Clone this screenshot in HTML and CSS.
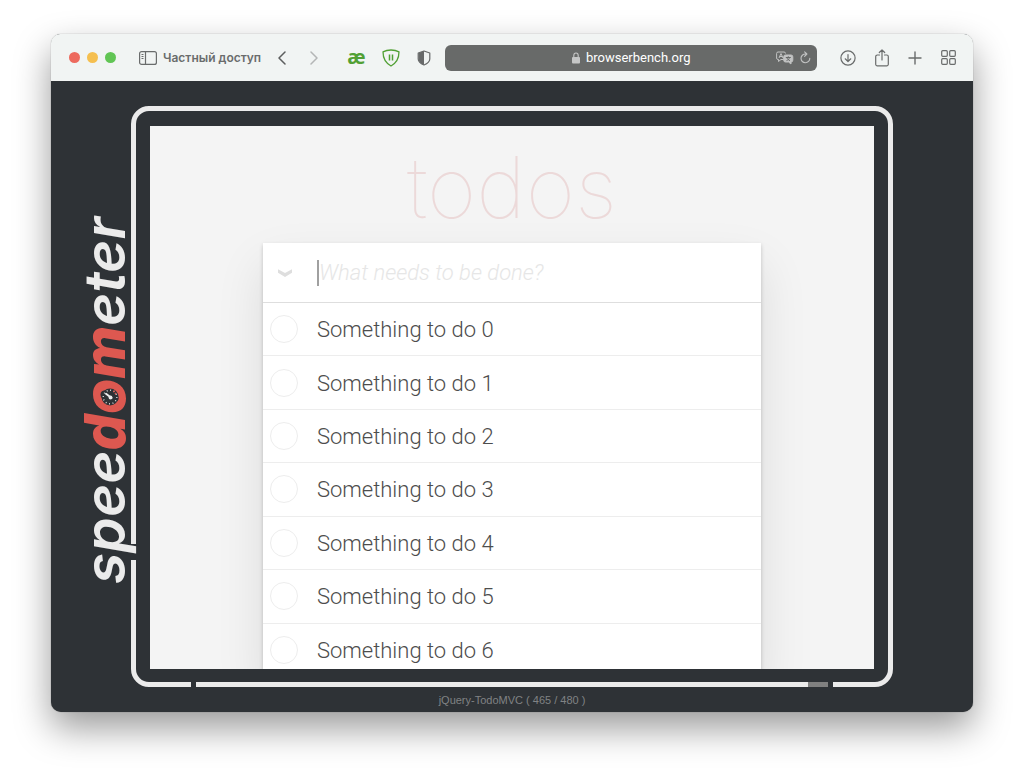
FILE: index.html
```html
<!DOCTYPE html>
<html lang="ru">
<head>
<meta charset="utf-8">
<title>Speedometer</title>
<link rel="stylesheet" href="styles.css">
</head>
<body>
<div class="window">
  <header class="toolbar">
    <div class="lights">
      <button class="light red" aria-label="Закрыть"></button>
      <button class="light yellow" aria-label="Свернуть"></button>
      <button class="light green" aria-label="Развернуть"></button>
    </div>
    <button class="private">
      <svg width="18" height="14" viewBox="0 0 18 14" fill="none" stroke="currentColor"><rect x=".6" y=".6" width="16.8" height="12.8" rx="2" stroke-width="1.2"/><path d="M6.5 .6v12.8" stroke-width="1.2"/><path d="M2.5 3.5h2M2.5 5.5h2M2.5 7.5h2"/></svg>
      <span>Частный доступ</span>
    </button>
    <div class="nav">
      <button class="icon" aria-label="Назад"><svg width="10" height="14" viewBox="0 0 10 14" fill="none" stroke="#5c5e5e" stroke-width="1.5" stroke-linecap="round" stroke-linejoin="round"><path d="M8 1 2 7l6 6"/></svg></button>
      <button class="icon" aria-label="Вперёд"><svg width="10" height="14" viewBox="0 0 10 14" fill="none" stroke="#b4b6b6" stroke-width="1.5" stroke-linecap="round" stroke-linejoin="round"><path d="m2 1 6 6-6 6"/></svg></button>
    </div>
    <div class="extensions">
      <button class="ae" aria-label="æ">æ</button>
      <button class="icon" aria-label="AdGuard"><svg width="18" height="18" viewBox="0 0 18 18" fill="none" stroke="#51a034" stroke-width="1.3" stroke-linejoin="round"><path d="M9 1C6.400 1 3.500 1.500 1 2.800c0 6 1.600 10.700 8 14.200 6.400-3.500 8-8.200 8-14.200C14.500 1.500 11.600 1 9 1z"/><path d="M7.500 5.500v6M10.500 5.500v6" stroke-width="1.500"/></svg></button>
      <button class="icon" aria-label="Отчёт"><svg width="14" height="16" viewBox="0 0 14 16"><path d="M7 1 1.500 3v6c0 3 2.500 4.700 5.500 6z" fill="#686a6a"/><path d="M7 1 1.200 3v6c0 3 2.800 4.700 5.800 6 3-1.300 5.800-3 5.800-6V3z" fill="none" stroke="#686a6a" stroke-width="1.200" stroke-linejoin="round"/></svg></button>
    </div>
    <div class="address">
      <a class="site" href="#">
        <svg width="8" height="12" viewBox="0 0 8 12"><rect y="5" width="8" height="6.500" rx="1" fill="#c5c6c6"/><path d="M1.800 5.500V3.500a2.200 2.500 0 0 1 4.400 0v2" fill="none" stroke="#c5c6c6" stroke-width="1.100"/></svg>
        <span>browserbench.org</span>
      </a>
      <div class="actions">
        <button class="icon" aria-label="Перевести"><svg width="18" height="14" viewBox="0 0 18 14" fill="none" stroke="#c2c3c3" stroke-linejoin="round"><path d="M7.500 8.500H5l-2.500 2V8.500H2A1.500 1.500 0 0 1 .6 7V2.500A1.500 1.500 0 0 1 2 1h6a1.500 1.500 0 0 1 1.500 1.500"/><path d="m3 7 2-4.500L7 7M3.700 5.500h2.600"/><path d="M9.500 4H15a1.800 1.800 0 0 1 1.800 1.800v3.400A1.800 1.800 0 0 1 15 11v2l-2.500-2h-3a1.800 1.800 0 0 1-1.800-1.800V5.800A1.800 1.800 0 0 1 9.500 4z" fill="#c2c3c3"/><path d="M9.800 6.500h5M12.300 5.300v1.200M10.500 9.600c1.600-.6 2.600-1.500 3-3M11 7c.6 1.200 1.500 2 3 2.600" stroke="#686a69"/></svg></button>
        <button class="icon" aria-label="Обновить"><svg width="11" height="13" viewBox="0 0 11 13" fill="none" stroke="#c2c3c3" stroke-width="1.100" stroke-linecap="round" stroke-linejoin="round"><path d="M9.800 7.300A4.400 4.400 0 1 1 5.500 3h1.200M4.600.8 6.900 3 4.600 5.300"/></svg></button>
      </div>
    </div>
    <div class="tools">
      <button class="icon" aria-label="Загрузки"><svg width="16" height="16" viewBox="0 0 16 16" fill="none" stroke="currentColor" stroke-width="1.200" stroke-linecap="round" stroke-linejoin="round"><circle cx="8" cy="8" r="7.100"/><path d="M8 4.500v7M5.200 8.800 8 11.500l2.800-2.700"/></svg></button>
      <button class="icon" aria-label="Поделиться"><svg width="14" height="18" viewBox="0 0 14 18" fill="none" stroke="currentColor" stroke-width="1.200" stroke-linecap="round" stroke-linejoin="round"><path d="M4.500 6H2.300A1.600 1.600 0 0 0 .7 7.600v7.600a1.600 1.600 0 0 0 1.600 1.600h9.400a1.600 1.600 0 0 0 1.600-1.600V7.600A1.600 1.600 0 0 0 11.700 6H9.500M7 11V1M4.300 3.500 7 .9l2.700 2.600"/></svg></button>
      <button class="icon" aria-label="Новая вкладка"><svg width="14" height="14" viewBox="0 0 14 14" stroke="currentColor" stroke-width="1.400" stroke-linecap="round"><path d="M7 1v12M1 7h12"/></svg></button>
      <button class="icon" aria-label="Обзор вкладок"><svg width="15" height="15" viewBox="0 0 15 15" fill="none" stroke="currentColor" stroke-width="1.200"><rect x=".7" y=".7" width="5.600" height="5.600" rx="1"/><rect x="8.700" y=".7" width="5.600" height="5.600" rx="1"/><rect x=".7" y="8.700" width="5.600" height="5.600" rx="1"/><rect x="8.700" y="8.700" width="5.600" height="5.600" rx="1"/></svg></button>
    </div>
  </header>

  <main class="bench">
    <div class="frame">
      <svg class="logo" width="72" height="380" viewBox="0 0 72 380" role="img" aria-label="speedometer">
        <rect x="60" y="338" width="7" height="16" fill="#2e3236"/>
        <text class="logo-text" transform="translate(55 378) rotate(-90)">spee<tspan class="logo-red">dom</tspan>eter</text>
        <g transform="translate(40 191)" fill="none" stroke="#ebebeb">
          <circle r="8.500" fill="#2e3236" stroke="none"/>
          <circle r="6.800" stroke-width="1.400" stroke-dasharray=".9 2.660"/>
          <path d="M-4-3.200 1.500 1" stroke-width="2" stroke-linecap="round"/>
          <circle cx=".5" cy=".5" r="1.900" fill="#ebebeb" stroke="none"/>
          <path d="M3.500-6.300 4.500-5M6-4 5-3" stroke="#dd5850" stroke-width="1.500"/>
        </g>
      </svg>
      <section class="screen">
        <h1 class="title">todos</h1>
        <div class="card">
          <div class="entry">
            <button class="toggle-all" aria-label="Toggle all"><svg width="16" height="10" viewBox="0 0 16 10" fill="#dedede"><path d="M1 1.200 8 5l7-3.800v3.600L8 9 1 4.800z"/></svg></button>
            <span class="caret"></span>
            <input class="new-todo" type="text" placeholder="What needs to be done?" aria-label="New todo">
          </div>
          <ul class="todos">
            <li class="todo"><label><input type="checkbox"><span>Something to do 0</span></label></li>
            <li class="todo"><label><input type="checkbox"><span>Something to do 1</span></label></li>
            <li class="todo"><label><input type="checkbox"><span>Something to do 2</span></label></li>
            <li class="todo"><label><input type="checkbox"><span>Something to do 3</span></label></li>
            <li class="todo"><label><input type="checkbox"><span>Something to do 4</span></label></li>
            <li class="todo"><label><input type="checkbox"><span>Something to do 5</span></label></li>
            <li class="todo"><label><input type="checkbox"><span>Something to do 6</span></label></li>
          </ul>
        </div>
      </section>
      <div class="progress"><div class="progress-done" style="width: 96.875%"></div></div>
    </div>
    <p class="status">jQuery-TodoMVC ( 465 / 480 )</p>
  </main>
</div>
</body>
</html>
```
FILE: styles.css
```css
* { box-sizing: border-box; }

body {
  margin: 0;
  height: 100vh;
  min-height: 480px;
  padding: 34px 51px 67px;
  background: #fff;
  font-family: "Liberation Sans", Arial, sans-serif;
  overflow: hidden;
}

button {
  padding: 0;
  border: 0;
  background: none;
  color: inherit;
  font: inherit;
}

.window {
  display: flex;
  flex-direction: column;
  height: 100%;
  border-radius: 10px;
  background: #2e3236;
  box-shadow: 0 0 1px rgba(0, 0, 0, .5), 0 16px 36px rgba(0, 0, 0, .4);
}

.toolbar {
  display: flex;
  align-items: center;
  height: 47px;
  flex: none;
  padding: 0 17px 0 18px;
  border-radius: 9px 9px 0 0;
  background: #f1f4f3;
  color: #6a6c6c;
}

.lights { display: flex; gap: 7px; }
.light { width: 11px; height: 11px; border-radius: 50%; }
.red { background: #ed6a5e; }
.yellow { background: #f5bf4f; }
.green { background: #61c554; }

.icon { display: flex; }

.private {
  display: flex;
  align-items: center;
  gap: 6px;
  margin-left: 23px;
  font: 600 12px Inter, sans-serif;
  white-space: nowrap;
}

.nav { display: flex; gap: 22px; margin-left: 16px; }

.extensions {
  display: flex;
  align-items: center;
  gap: 17px;
  margin: 0 14px 0 28px;
}

.ae {
  padding-bottom: 2px;
  color: #51a034;
  font: 700 20px/20px "Open Sans", sans-serif;
}

.address {
  display: grid;
  grid-template-columns: 1fr auto 1fr;
  align-items: center;
  flex: 1;
  height: 26px;
  padding: 0 6px;
  border-radius: 6px;
  background: #686a69;
}

.site {
  grid-column: 2;
  display: flex;
  align-items: center;
  gap: 6px;
  color: #fff;
  font: 400 13px Roboto, sans-serif;
  text-decoration: none;
}

.actions {
  display: flex;
  align-items: center;
  justify-content: flex-end;
  gap: 6px;
}

.tools {
  display: flex;
  align-items: center;
  gap: 19px;
  margin-left: 23px;
}

.bench {
  display: flex;
  flex-direction: column;
  flex: 1;
  min-height: 0;
  padding: 25px 80px 5px;
}

.frame {
  position: relative;
  display: flex;
  flex: 1;
  min-height: 0;
  padding: 15px 14px 13px;
  border: 5px solid #ebebeb;
  border-radius: 18px;
}

/* Vertical wordmark drawn across the left edge of the frame. */
.logo {
  position: absolute;
  left: -66px;
  bottom: 96px;
  overflow: visible;
}

.logo-text {
  fill: #ebebeb;
  font: italic 600 57px Inter, sans-serif;
}

.logo-red { fill: #dd5850; font-weight: 800; }

.screen {
  flex: 1;
  min-width: 0;
  overflow: hidden;
  background: #f4f4f4;
}

.title {
  margin: 0;
  padding-top: 4px;
  height: 117px;
  color: #ecd9d9;
  font: 100 85px/116px Inter, sans-serif;
  text-align: center;
}

.card {
  width: 68.8%;
  margin: 0 auto;
  background: #fff;
  box-shadow: 0 2px 4px rgba(0, 0, 0, .2), 0 22px 45px rgba(0, 0, 0, .1);
}

.entry {
  display: flex;
  align-items: center;
  height: 60px;
  border-bottom: 1px solid #dedede;
}

.toggle-all {
  display: flex;
  justify-content: center;
  width: 45px;
}

.caret {
  width: 2px;
  height: 26px;
  margin-left: 9px;
  background: #a0a0a0;
}

.new-todo {
  flex: 1;
  min-width: 0;
  padding: 0;
  border: 0;
  outline: 0;
  background: none;
  color: #4d4d4d;
  font: 300 22px/28px Roboto, sans-serif;
}

.new-todo::placeholder { color: #e6e6e6; font-style: italic; opacity: 1; }

.todos {
  display: grid;
  grid-auto-rows: 1fr;
  height: 374px;
  margin: 0;
  padding: 0;
  list-style: none;
}

.todo { border-bottom: 1px solid #ededed; }

.todo label {
  display: flex;
  align-items: center;
  gap: 19px;
  height: 100%;
  padding-left: 7px;
  color: #4d4d4d;
  font: 300 22px/28px Roboto, sans-serif;
}

.todo span { padding-top: 2px; }

.todo input {
  appearance: none;
  flex: none;
  width: 28px;
  height: 28px;
  margin: 0;
  border: 1px solid #ededed;
  border-radius: 50%;
}

/* The bar replaces a stretch of the frame's lower border. */
.progress {
  position: absolute;
  left: 55px;
  right: 55px;
  bottom: -5px;
  height: 5px;
  border: solid #2e3236;
  border-width: 0 5px;
  background: #808080;
}

.progress-done { height: 100%; background: #ebebeb; }

.status {
  margin: 6px 0 0;
  color: #808284;
  font-size: 11px;
  line-height: 14px;
  text-align: center;
}
```
